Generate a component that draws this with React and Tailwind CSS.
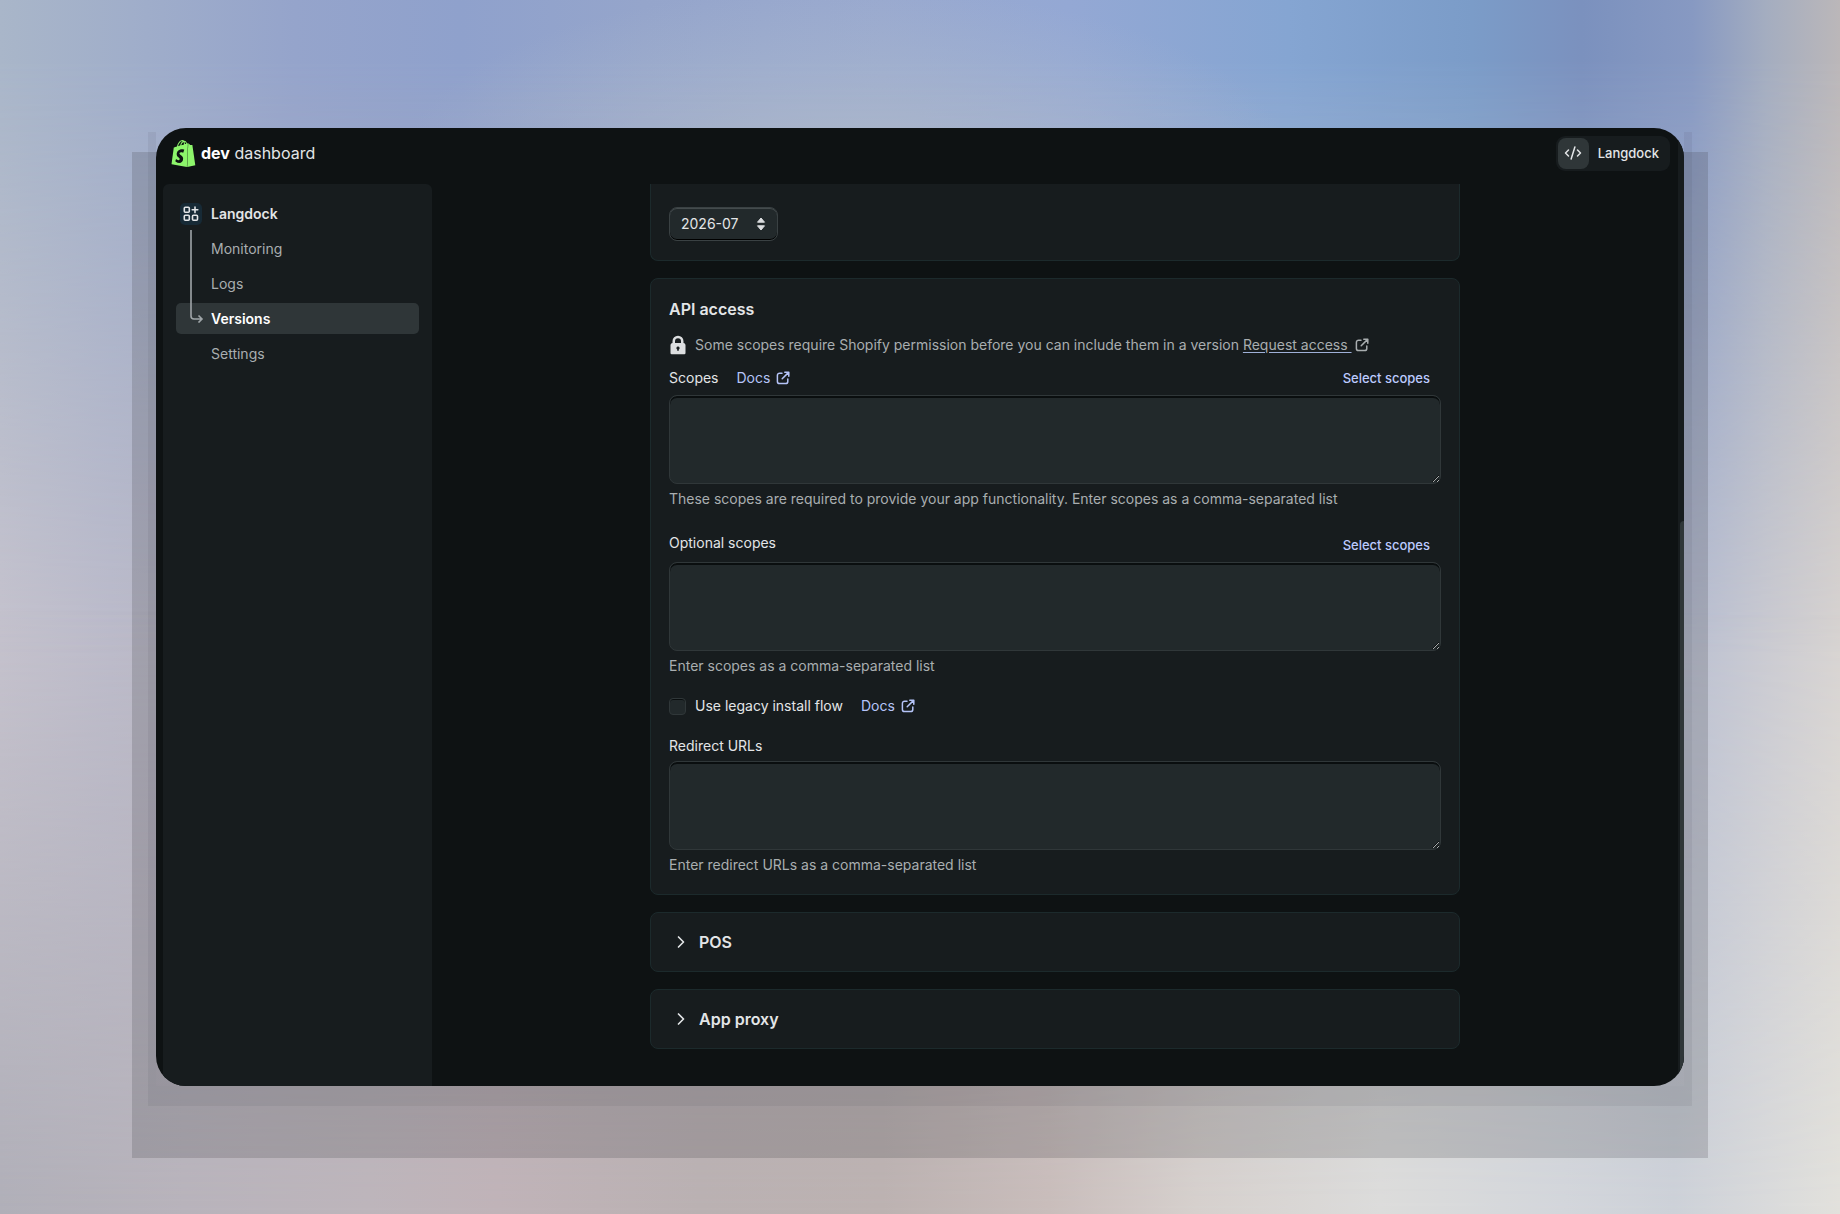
import { ChevronRight, CodeXml } from "lucide-react";
import { SiShopify } from "react-icons/si";

const navItems = ["Monitoring", "Logs", "Versions", "Settings"];

function ExternalIcon() {
  return (
    <svg
      viewBox="0 0 14 14"
      className="size-3.5 shrink-0"
      fill="none"
      stroke="currentColor"
      strokeWidth="1.5"
      strokeLinecap="round"
      strokeLinejoin="round"
      aria-hidden="true"
    >
      <path d="M6 2.2H3.6A2.2 2.2 0 0 0 1.4 4.4v6a2.2 2.2 0 0 0 2.2 2.2h6a2.2 2.2 0 0 0 2.2-2.2V8" />
      <path d="M8.8 1.2h4v4M12.6 1.4 6.2 7.8" />
    </svg>
  );
}

function AppsIcon() {
  return (
    <svg
      viewBox="0 0 16 16"
      className="size-4"
      fill="none"
      stroke="currentColor"
      strokeWidth="1.6"
      strokeLinecap="round"
      aria-hidden="true"
    >
      <rect x="1.3" y="1.3" width="5" height="5" rx="1" />
      <rect x="1.3" y="9.3" width="5" height="5" rx="1" />
      <rect x="9.5" y="9.3" width="5" height="5" rx="1" />
      <path d="M12 1v5.6M9.2 3.8h5.6" />
    </svg>
  );
}

function LockIcon() {
  return (
    <svg viewBox="0 0 18 20" className="h-5 w-[18px] shrink-0" aria-hidden="true">
      <path
        fill="#dcdee0"
        fillRule="evenodd"
        d="M3.500 8V6.200a5.500 5.500 0 0 1 11 0V8c1.200.2 2 1 2 2.200V18a1.200 1.200 0 0 1-1.200 1.200H2.700A1.200 1.200 0 0 1 1.500 18v-7.800C1.500 9 2.300 8.200 3.500 8Zm2.500 0h6V6.200a3 3 0 0 0-6 0V8Zm3 3.500a1.600 1.600 0 0 0-.8 3v1.200h1.600v-1.200a1.600 1.600 0 0 0-.8-3Z"
      />
    </svg>
  );
}

function DocsLink() {
  return (
    <a href="#docs" className="flex items-center gap-1.5 text-[#b5c4f8]">
      Docs
      <ExternalIcon />
    </a>
  );
}

function SelectScopes() {
  return (
    <button
      type="button"
      className="mr-[11px] text-[13px] leading-6 font-medium text-[#bccaff]"
    >
      Select scopes
    </button>
  );
}

function ScopeField({ id, help }) {
  return (
    <>
      <textarea
        id={id}
        aria-describedby={`${id}-help`}
        className="mt-[5px] block h-[89px] w-full resize-y rounded-lg border border-[#303739] bg-[#22292b] px-3 py-2 text-[#e3e5e7] shadow-[inset_0_2px_0_#0a0e0f] outline-none"
      />
      <p id={`${id}-help`} className="mt-[5px] leading-5 text-[#a9aeb0]">
        {help}
      </p>
    </>
  );
}

function Sidebar() {
  return (
    <aside className="ml-[7px] w-[269px] shrink-0 rounded-t-md bg-[#171c1e] px-[13px] pt-[14px]">
      <a href="#app" className="flex h-[31px] items-center pl-1 font-semibold text-[#e3e5e7]">
        <span className="mr-[9px] flex size-[22px] items-center justify-center rounded-[5px] bg-[#172a36]">
          <AppsIcon />
        </span>
        Langdock
      </a>
      <nav className="relative mt-1 flex flex-col gap-1">
        {navItems.map((item) => (
          <a
            key={item}
            href={`#${item.toLowerCase()}`}
            className={
              item === "Versions"
                ? "flex h-[31px] items-center rounded-[5px] bg-[#2f3638] pl-[35px] font-semibold text-white"
                : "flex h-[31px] items-center pl-[35px] text-[#a9aeb0]"
            }
          >
            {item}
          </a>
        ))}
        <svg
          viewBox="0 0 14 94"
          className="absolute -top-1 left-[14px] h-[94px] w-3.5"
          fill="none"
          stroke="#a0a6a9"
          strokeWidth="1.6"
          aria-hidden="true"
        >
          <path d="M1 1v86a3 3 0 0 0 3 3h7M8.500 86.500 12 90l-3.500 3.500" />
        </svg>
      </nav>
    </aside>
  );
}

function VersionCard() {
  return (
    <section className="rounded-b-lg border border-t-0 border-[#1c2a2c] bg-[#171c1e] px-[18px] pt-[23px] pb-[19px]">
      <div className="relative w-[109px]">
        <select
          aria-label="API version"
          className="h-[34px] w-full appearance-none rounded-lg border border-[#3a4143] bg-[#22292b] pl-[11px] text-[#e3e5e7] shadow-[inset_0_-1px_0_#000,inset_0_1px_0_#444b4d] outline-none"
        >
          <option>2026-07</option>
        </select>
        <svg
          viewBox="0 0 10 14"
          className="pointer-events-none absolute top-[10px] right-3 h-3.5 w-2.5"
          fill="#dcdee0"
          stroke="#dcdee0"
          strokeLinejoin="round"
          aria-hidden="true"
        >
          <path d="M5 1 8.500 5.200h-7ZM5 13 1.500 8.800h7Z" />
        </svg>
      </div>
    </section>
  );
}

function ApiAccessCard() {
  return (
    <section className="rounded-lg border border-[#1c2a2c] bg-[#171c1e] px-[18px] pt-[18px] pb-[19px]">
      <h2 className="text-base leading-6 font-semibold">API access</h2>

      <div className="mt-3 flex items-center gap-2 leading-6 text-[#a9aeb0]">
        <LockIcon />
        <p className="flex items-center whitespace-pre">
          Some scopes require Shopify permission before you can include them in a version{" "}
          <a href="#request" className="flex items-center">
            <span className="mr-[3px] underline decoration-[#9fb0d8] underline-offset-2">
              {"Request access "}
            </span>
            <ExternalIcon />
          </a>
        </p>
      </div>

      <div className="mt-[9px] flex items-center leading-6">
        <label htmlFor="scopes" className="mr-[18px]">
          Scopes
        </label>
        <DocsLink />
        <span className="grow" />
        <SelectScopes />
      </div>
      <ScopeField
        id="scopes"
        help="These scopes are required to provide your app functionality. Enter scopes as a comma-separated list"
      />

      <div className="mt-6 flex items-start justify-between">
        <label htmlFor="optional-scopes" className="leading-5">
          Optional scopes
        </label>
        <SelectScopes />
      </div>
      <ScopeField id="optional-scopes" help="Enter scopes as a comma-separated list" />

      <div className="mt-[18px] flex items-center leading-6">
        <label className="mr-[18px] flex items-center gap-[9px]">
          <input
            type="checkbox"
            className="size-[17px] appearance-none rounded border border-[#303739] bg-[#22292b] shadow-[inset_0_1px_0_#0a0e0f]"
          />
          Use legacy install flow
        </label>
        <DocsLink />
      </div>

      <label htmlFor="redirect-urls" className="mt-[18px] block leading-5">
        Redirect URLs
      </label>
      <ScopeField id="redirect-urls" help="Enter redirect URLs as a comma-separated list" />
    </section>
  );
}

function CollapsedCard({ title }) {
  return (
    <section className="rounded-lg border border-[#1c2a2c] bg-[#171c1e]">
      <button
        type="button"
        aria-expanded="false"
        className="flex w-full items-center gap-2 py-[17px] pl-5 text-base leading-6 font-semibold"
      >
        <ChevronRight className="size-5" strokeWidth={2} />
        {title}
      </button>
    </section>
  );
}

// Soft wallpaper: a middle band with a top and a bottom band faded over it.
function Wallpaper({ children }) {
  return (
    <div className="relative min-h-screen bg-[linear-gradient(to_right,#c6c3ce,#bdbccb_6%,#b5b0b8_20%,#b8b2b8_50%,#cfcfd2_78%,#bcc1d2_92%,#cecdd2_97%,#d8d4d2)]">
      <div className="absolute inset-0 bg-[radial-gradient(ellipse_24%_14%_at_46%_13%,#a9b7cd_0%,#a9b7cd00_100%),linear-gradient(to_right,#a9b6c9,#9fadca_8%,#95a4cb_16%,#8fa1cc_25%,#95a5cb_35%,#99a9cf_48%,#94a8d4_58%,#85a5d2_70%,#7b9cc8_80%,#7b91be_86%,#8799c2_92%,#a4adc0_96%,#bbb7b9)] mask-[linear-gradient(to_bottom,black_5%,transparent_54%)]" />
      <div className="absolute inset-0 bg-[linear-gradient(to_right,#b0afb8,#b8b3bb_10%,#bdb5bb_20%,#c0b3b8_27%,#bab1b2_38%,#bcb2b1_48%,#c9bdbb_57%,#d6d0cd_65%,#dcdcdb_75%,#d3d6db_85%,#cdd1d8_91%,#d9dadb_96%,#e2e1dc)] mask-[linear-gradient(to_top,black_0%,transparent_50%)]" />
      <div className="relative flex min-h-screen px-[156px] py-32">{children}</div>
    </div>
  );
}

export default function App() {
  return (
    <div className="font-[Inter,sans-serif] text-sm text-[#e3e5e7] [color-scheme:dark]">
      <Wallpaper>
        <div className="flex grow bg-[linear-gradient(to_bottom,transparent_24px,#33333a3d_24px)] shadow-[0_12px_0_8px_#2b2b3312,0_48px_0_24px_#33333a30]">
          <div className="flex grow overflow-hidden rounded-[30px] bg-[#0e1213]">
            <div className="flex grow flex-col">
              <header className="flex h-14 items-center justify-between pr-2 pl-[14px]">
                <a href="#home" className="mb-1.5 flex items-center gap-1 text-base">
                  <SiShopify className="size-[27px] text-[#8df56b]" aria-hidden="true" />
                  <span>
                    <strong className="font-bold text-white">dev</strong> dashboard
                  </span>
                </a>
                <button
                  type="button"
                  className="mb-1.5 flex items-center gap-[9px] rounded-[9px] bg-[#171c1e] p-0.5 pr-[11px] text-[13px] font-medium"
                >
                  <span className="flex size-[31px] items-center justify-center rounded-lg bg-[#2f3638]">
                    <CodeXml className="size-[18px]" strokeWidth={2} />
                  </span>
                  Langdock
                </button>
              </header>
              <div className="flex grow">
                <Sidebar />
                <main className="grow">
                  <div className="mx-auto flex max-w-[810px] flex-col gap-[17px] pb-9">
                    <VersionCard />
                    <ApiAccessCard />
                    <CollapsedCard title="POS" />
                    <CollapsedCard title="App proxy" />
                  </div>
                </main>
              </div>
            </div>
            <div className="flex w-1.5 flex-col items-end bg-[#171c1e]">
              <div className="h-[41%]" />
              <div className="w-1 grow rounded-tl-sm bg-[#2f3638]" />
            </div>
          </div>
        </div>
      </Wallpaper>
    </div>
  );
}
